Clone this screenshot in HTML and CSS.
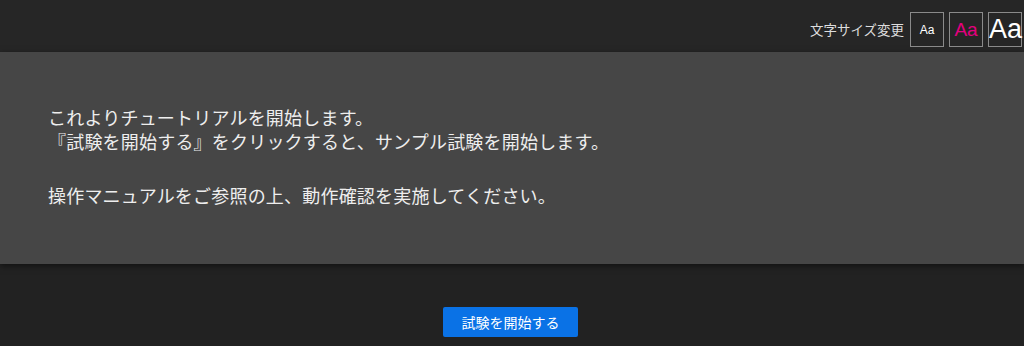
FILE: index.html
```html
<!DOCTYPE html>
<html lang="ja">

<head>
    <meta charset="UTF-8">
    <meta name="viewport" content="width=device-width, initial-scale=1.0">
    <title>チュートリアル</title>
    <link rel="stylesheet" href="styles.css">
</head>

<body>
    <header class="top-bar">
        <span class="size-label">文字サイズ変更</span>
        <button class="size-btn size-small">Aa</button>
        <button class="size-btn size-medium">Aa</button>
        <button class="size-btn size-large">Aa</button>
    </header>

    <main class="panel">
        <p>これよりチュートリアルを開始します。<br>『試験を開始する』をクリックすると、サンプル試験を開始します。</p>
        <p>操作マニュアルをご参照の上、動作確認を実施してください。</p>
    </main>

    <div class="actions">
        <button class="start-btn">試験を開始する</button>
    </div>
</body>

</html>
```

FILE: styles.css
```css
body {
    font-family: "Noto Sans CJK JP", "Noto Sans", sans-serif;
    margin: 0;
    padding: 0;
    height: 346px;
    overflow: hidden;
    background-color: #222;
    color: #eee;
}

.top-bar {
    height: 52px;
    box-sizing: border-box;
    display: flex;
    justify-content: flex-end;
    align-items: flex-start;
    gap: 5px;
    padding: 12px 2px 0 0;
    background-color: #262626;
}

.size-label {
    font-size: 13.5px;
    color: #ddd;
    line-height: 35px;
    margin-right: 1px;
}

.size-btn {
    width: 34px;
    height: 35px;
    padding: 0;
    background: transparent;
    border: 1px solid #8a8a8a;
    color: #fff;
    font-family: "Liberation Sans", Arial, sans-serif;
    line-height: 1;
    cursor: pointer;
}

.size-small {
    font-size: 12px;
}

.size-medium {
    font-size: 19px;
    color: #e4007f;
}

.size-large {
    font-size: 27px;
}

.panel {
    background-color: #464646;
    padding: 53px 48px 57px;
    box-shadow: 0 2px 6px rgba(0, 0, 0, 0.5);
    font-size: 18px;
    line-height: 24px;
    letter-spacing: 0.2px;
}

.panel p {
    margin: 0;
}

.panel p + p {
    margin-top: 30px;
}

.actions {
    display: flex;
    justify-content: center;
    padding-top: 43px;
    padding-right: 3px;
}

.start-btn {
    width: 135px;
    height: 30px;
    background-color: #0a72e6;
    color: #fff;
    border: none;
    border-radius: 2px;
    font-family: "Noto Sans CJK JP", sans-serif;
    font-size: 14px;
    cursor: pointer;
}
```
